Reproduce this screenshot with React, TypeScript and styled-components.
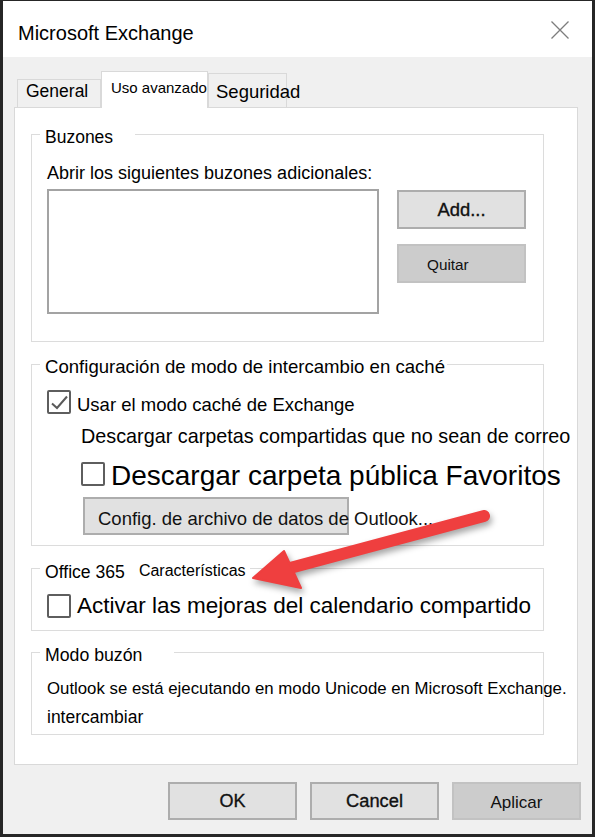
import React from "react";
import styled, { createGlobalStyle } from "styled-components";

const GlobalStyle = createGlobalStyle`
  html, body { margin: 0; padding: 0; background: #fff; }
  body { font-family: "Liberation Sans", Arial, sans-serif; color: #000; }
  * { box-sizing: border-box; }
`;

const Window = styled.div`
  position: relative;
  width: 595px;
  height: 837px;
  display: flex;
  flex-direction: column;
  border-style: solid;
  border-color: #262626;
  border-width: 1px 3px 3px 3px;
  background: #f0f0f0;
  overflow: hidden;
`;

const TitleBar = styled.div`
  flex: none;
  height: 56px;
  background: #fff;
  display: flex;
  align-items: flex-start;
  justify-content: space-between;
  padding: 20px 23px 0 15px;
`;

const Title = styled.div`
  font-size: 20px;
  line-height: 24px;
  color: #000;
`;

const CloseIcon = styled.svg`
  width: 18px;
  height: 18px;
  flex: none;
`;

const Body = styled.div`
  flex: 1;
  display: flex;
  flex-direction: column;
  padding: 14px 14px 0 11px;
`;

const TabRow = styled.div`
  height: 36px;
  display: flex;
  align-items: flex-end;
  padding-left: 3px;
`;

const Tab = styled.div<{
  $active?: boolean;
  $width: number;
  $height: number;
  $fs: number;
  $lh: number;
  $padTop: number;
  $padLeft: number;
}>`
  position: relative;
  z-index: ${(p) => (p.$active ? 1 : 0)};
  width: ${(p) => p.$width}px;
  height: ${(p) => p.$height}px;
  margin-bottom: ${(p) => (p.$active ? -1 : 0)}px;
  border: 1px solid #d9d9d9;
  border-bottom: none;
  background: ${(p) => (p.$active ? "#fff" : "#f0f0f0")};
  padding: ${(p) => p.$padTop}px 0 0 ${(p) => p.$padLeft}px;
  font-size: ${(p) => p.$fs}px;
  line-height: ${(p) => p.$lh}px;
  white-space: nowrap;
  color: #000;
`;

const Panel = styled.div`
  width: 564px;
  height: 658px;
  background: #fff;
  border: 1px solid #d9d9d9;
  display: flex;
  flex-direction: column;
  padding-left: 16px;
`;

const Group = styled.div<{ $gap: number; $height: number }>`
  width: 513px;
  height: ${(p) => p.$height}px;
  margin-top: ${(p) => p.$gap}px;
  border: 1px solid #dcdcdc;
  padding-left: 15px;
  display: flex;
  flex-direction: column;
  align-items: flex-start;
`;

const Legend = styled.div<{ $fs: number; $padRight: number }>`
  margin: -14px 0 0 -7px;
  height: 26px;
  padding: 6px ${(p) => p.$padRight}px 0 5px;
  background: #fff;
  font-size: ${(p) => p.$fs}px;
  line-height: 20px;
  white-space: nowrap;
`;

const LegendNote = styled.span`
  margin-left: 14px;
  font-size: 16px;
  vertical-align: 2px;
`;

const Text = styled.div<{ $fs: number; $lh: number; $mt?: number; $ml?: number }>`
  font-size: ${(p) => p.$fs}px;
  line-height: ${(p) => p.$lh}px;
  margin-top: ${(p) => p.$mt ?? 0}px;
  margin-left: ${(p) => p.$ml ?? 0}px;
  white-space: nowrap;
`;

const Row = styled.div<{ $mt: number; $ml?: number; $gap?: number }>`
  display: flex;
  align-items: flex-start;
  margin-top: ${(p) => p.$mt}px;
  margin-left: ${(p) => p.$ml ?? 0}px;
  gap: ${(p) => p.$gap ?? 0}px;
`;

const ListBox = styled.div`
  flex: none;
  width: 332px;
  height: 125px;
  border: 2px solid #a3a3a3;
  background: #fff;
`;

const ButtonStack = styled.div`
  display: flex;
  flex-direction: column;
  gap: 15px;
  padding-top: 1px;
  margin-left: 18px;
`;

const PushButton = styled.div<{
  $muted?: boolean;
  $width: number;
  $height: number;
  $fs: number;
  $padLeft?: number;
  $padTop?: number;
  $heavy?: boolean;
}>`
  flex: none;
  width: ${(p) => p.$width}px;
  height: ${(p) => p.$height}px;
  border: 2px solid ${(p) => (p.$muted ? "#c2c2c2" : "#adadad")};
  background: ${(p) => (p.$muted ? "#cccccc" : "#e1e1e1")};
  font-size: ${(p) => p.$fs}px;
  line-height: 22px;
  color: #111;
  display: flex;
  align-items: ${(p) => (p.$padTop !== undefined ? "flex-start" : "center")};
  justify-content: ${(p) => (p.$padLeft !== undefined ? "flex-start" : "center")};
  padding: ${(p) => p.$padTop ?? 0}px 0 0 ${(p) => p.$padLeft ?? 0}px;
  white-space: nowrap;
  cursor: default;
  -webkit-text-stroke: ${(p) => (p.$heavy ? "0.35px #111" : "0")};
`;

const Box = styled.span<{ $mt?: number }>`
  flex: none;
  width: 24px;
  height: 24px;
  margin-top: ${(p) => p.$mt ?? 0}px;
  border: 2px solid #5e5e5e;
  border-radius: 2px;
  background: #fff;
  display: flex;
`;

const Footer = styled.div`
  display: flex;
  justify-content: flex-end;
  gap: 13px;
  margin: 17px -3px 0 0;
`;

const ArrowLayer = styled.svg`
  position: absolute;
  left: -3px;
  top: -1px;
  width: 595px;
  height: 837px;
  pointer-events: none;
  filter: drop-shadow(2px 4px 3px rgba(0, 0, 0, 0.35));
`;

function CheckBox({ checked, mt }: { checked?: boolean; mt?: number }) {
  return (
    <Box $mt={mt}>
      {checked && (
        <svg width="20" height="20" viewBox="0 0 20 20">
          <path d="M3 11.5 L8 16 L18 4.5" fill="none" stroke="#5a5a5a" strokeWidth="2" />
        </svg>
      )}
    </Box>
  );
}

export default function App() {
  return (
    <>
      <GlobalStyle />
      <Window>
        <TitleBar>
          <Title>Microsoft Exchange</Title>
          <CloseIcon viewBox="0 0 18 18">
            <path d="M0.5 0.5 L17.5 17.5 M17.5 0.5 L0.5 17.5" stroke="#7d7d7d" strokeWidth="1.3" fill="none" />
          </CloseIcon>
        </TitleBar>

        <Body>
          <TabRow>
            <Tab $width={84} $height={28} $fs={17.5} $lh={20} $padTop={1} $padLeft={8}>
              General
            </Tab>
            <Tab $active $width={107} $height={37} $fs={15} $lh={18} $padTop={7} $padLeft={9}>
              Uso avanzado
            </Tab>
            <Tab $width={79} $height={34} $fs={18.5} $lh={21} $padTop={7} $padLeft={7}>
              Seguridad
            </Tab>
          </TabRow>

          <Panel>
            <Group $gap={26} $height={208}>
              <Legend $fs={17.5} $padRight={22}>Buzones</Legend>
              <Text $fs={18} $lh={21} $mt={16}>
                Abrir los siguientes buzones adicionales:
              </Text>
              <Row $mt={5}>
                <ListBox />
                <ButtonStack>
                  <PushButton $width={129} $height={39} $fs={18.4} $heavy>
                    Add...
                  </PushButton>
                  <PushButton $muted $width={129} $height={39} $fs={15.3} $padLeft={28} $padTop={8}>
                    Quitar
                  </PushButton>
                </ButtonStack>
              </Row>
            </Group>

            <Group $gap={22} $height={182}>
              <Legend $fs={18.6} $padRight={2}>
                Configuración de modo de intercambio en caché
              </Legend>
              <Row $mt={13} $gap={6}>
                <CheckBox checked />
                <Text $fs={18.5} $lh={22} $mt={4}>
                  Usar el modo caché de Exchange
                </Text>
              </Row>
              <Text $fs={19.8} $lh={23} $mt={9} $ml={34}>
                Descargar carpetas compartidas que no sean de correo
              </Text>
              <Row $mt={12} $ml={34} $gap={6}>
                <CheckBox mt={2} />
                <Text $fs={28} $lh={32}>
                  Descargar carpeta pública Favoritos
                </Text>
              </Row>
              <Row $mt={5} $ml={36}>
                <PushButton $width={266} $height={38} $fs={18.5} $padLeft={13} $padTop={9}>
                  Config. de archivo de datos de Outlook...
                </PushButton>
              </Row>
            </Group>

            <Group $gap={22} $height={63}>
              <Legend $fs={17.6} $padRight={4}>
                Office 365
                <LegendNote>Características</LegendNote>
              </Legend>
              <Row $mt={12} $gap={6}>
                <CheckBox mt={1} />
                <Text $fs={22.5} $lh={26}>
                  Activar las mejoras del calendario compartido
                </Text>
              </Row>
            </Group>

            <Group $gap={21} $height={83}>
              <Legend $fs={17.7} $padRight={32}>Modo buzón</Legend>
              <Text $fs={16.8} $lh={20} $mt={14}>
                Outlook se está ejecutando en modo Unicode en Microsoft Exchange.
              </Text>
              <Text $fs={17.5} $lh={20} $mt={8}>
                intercambiar
              </Text>
            </Group>
          </Panel>

          <Footer>
            <PushButton $width={129} $height={38} $fs={18} $heavy>
              OK
            </PushButton>
            <PushButton $width={129} $height={38} $fs={18.3} $heavy>
              Cancel
            </PushButton>
            <PushButton $muted $width={129} $height={38} $fs={17} $padTop={8}>
              Aplicar
            </PushButton>
          </Footer>
        </Body>

        <ArrowLayer viewBox="0 0 595 837">
          <line x1="484" y1="516" x2="290" y2="568" stroke="#ef3f3f" strokeWidth="12" strokeLinecap="round" />
          <path d="M253 578 L284 551 L301 588 Z" fill="#ef3f3f" stroke="#ef3f3f" strokeWidth="2" strokeLinejoin="round" />
        </ArrowLayer>
      </Window>
    </>
  );
}
